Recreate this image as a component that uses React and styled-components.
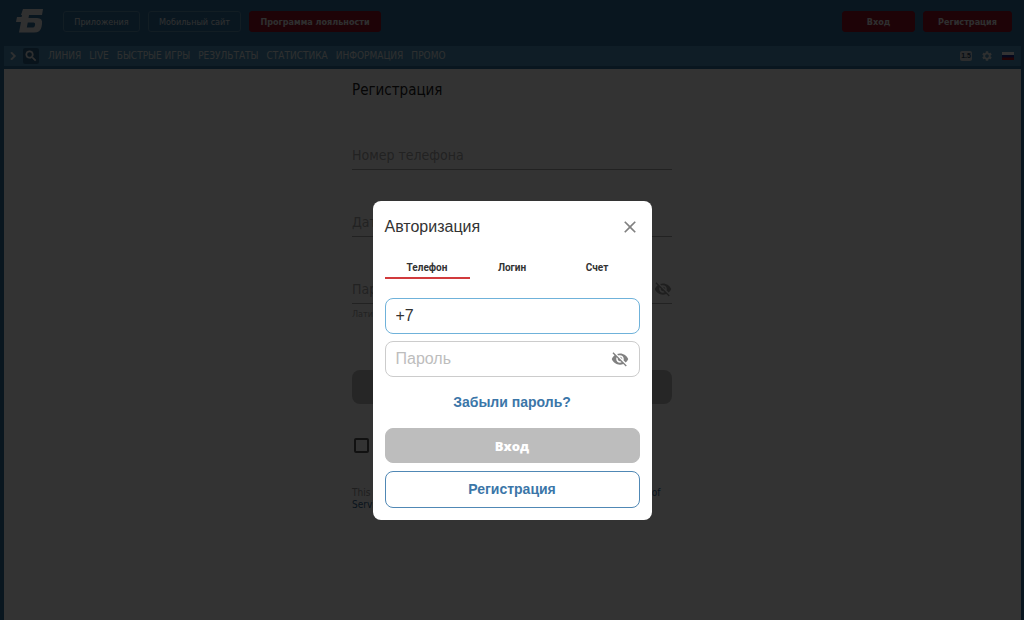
import React, { useState } from "react";
import styled, { createGlobalStyle } from "styled-components";
import { MdVisibilityOff, MdSettings, MdClose, MdSearch, MdChevronRight } from "react-icons/md";

const GlobalStyle = createGlobalStyle`
  * {
    box-sizing: border-box;
  }
  body {
    margin: 0;
    background: #2f6d9b;
    font-family: Tahoma, "DejaVu Sans Condensed", "Noto Sans", sans-serif;
  }
  button, input {
    font-family: inherit;
    margin: 0;
  }
`;

const Page = styled.div`
  min-height: 100vh;
  display: flex;
  flex-direction: column;
  background: #2f6d9b;
  padding: 0 3px 0 4px;
`;

const Header = styled.header`
  height: 46px;
  display: flex;
  align-items: center;
  gap: 8px;
  padding: 0 9px 3px 12px;
`;

const Logo = styled.svg`
  width: 28px;
  height: 26px;
  margin-right: 11px;
`;

const Spacer = styled.div`
  flex: 1;
`;

const HeaderButton = styled.button`
  height: 21px;
  padding: 0 10px;
  border-radius: 3px;
  border: 1px solid ${props => (props.$red ? "#960f23" : "#5a8fb0")};
  background: ${props => (props.$red ? "#960f23" : "transparent")};
  color: #e6eaec;
  font-size: 9px;
  line-height: 12px;
  font-weight: ${props => (props.$red ? "bold" : "normal")};
  min-width: ${props => props.$width || "0"};
  white-space: nowrap;
`;

const NavBar = styled.nav`
  height: 20px;
  display: flex;
  align-items: center;
  gap: 8px;
  padding: 0 7px 0 1px;
  background: #4a93bd;
  color: #e6eaec;
`;

const NavButton = styled.button`
  width: 16px;
  height: 16px;
  padding: 0;
  border: 0;
  border-radius: 2px;
  background: ${props => (props.$dark ? "#2c6289" : "transparent")};
  color: #f0f0f0;
  display: flex;
  align-items: center;
  justify-content: center;
  margin-left: ${props => (props.$dark ? "-6px" : "0")};
  font-size: ${props => (props.$dark ? "14px" : "16px")};

  path:last-child {
    stroke: currentColor;
    stroke-width: 1;
  }
`;

const NavLinks = styled.div`
  display: flex;
  gap: 8px;
  padding-left: 1px;
`;

const NavLink = styled.a`
  color: inherit;
  font-size: 10px;
  line-height: 14px;
  text-decoration: none;
  white-space: nowrap;
`;

const NavTools = styled.div`
  display: flex;
  align-items: center;
  gap: 9px;
`;

const OddsBadge = styled.button`
  width: 12px;
  height: 10px;
  padding: 0;
  border: 0;
  border-radius: 2px;
  background: #d5dce0;
  color: #1f4560;
  font-family: "Liberation Sans", Arial, sans-serif;
  font-size: 7px;
  font-weight: bold;
  line-height: 10px;
`;

const Flag = styled.svg`
  width: 12px;
  height: 8px;
`;

const Content = styled.main`
  flex: 1;
  margin-top: 3px;
  padding-right: 1px;
  background: #fff;
  display: flex;
  justify-content: center;
`;

const Form = styled.form`
  width: 320px;
  padding-top: 9px;
`;

const FormTitle = styled.h1`
  margin: 0 0 44px;
  font-size: 15px;
  line-height: 24px;
  font-weight: normal;
  color: #222;
`;

const Field = styled.div`
  display: flex;
  align-items: center;
  height: 24px;
  margin-bottom: 43px;
  padding-bottom: 6px;
  border-bottom: 1px solid #aaa;
  color: #999;
  font-size: 18px;
`;

const LineInput = styled.input`
  flex: 1;
  min-width: 0;
  padding: 0;
  border: 0;
  outline: none;
  background: transparent;
  font-size: 14px;
  line-height: 16px;

  &::placeholder {
    color: #aaa;
  }
`;

const Hint = styled.p`
  margin: -39px 0 50px;
  font-size: 9px;
  line-height: 12px;
  color: #aaa;
`;

const SubmitButton = styled.button`
  display: block;
  width: 100%;
  height: 34px;
  border: 0;
  border-radius: 8px;
  background: #bdbdbd;
  color: #fff;
  font-weight: bold;
`;

const Agreement = styled.label`
  display: flex;
  align-items: center;
  gap: 8px;
  margin: 34px 0;
  padding-left: 2px;
  height: 15px;
  font-size: 10px;
  color: #333;

  input {
    appearance: none;
    width: 15px;
    height: 15px;
    border: 2px solid #555;
    border-radius: 2px;
  }
`;

const Legal = styled.p`
  margin: 0;
  font-size: 10px;
  line-height: 12px;
  color: #999;

  a {
    color: #336791;
    text-decoration: none;
  }
`;

const Overlay = styled.div`
  position: fixed;
  inset: 0;
  display: flex;
  align-items: center;
  justify-content: center;
  padding-top: 101px;
  background: rgba(0, 0, 0, 0.8);
`;

const Modal = styled.div`
  width: 279px;
  padding: 12px;
  border-radius: 8px;
  background: #fff;
  font-family: "Liberation Sans", Arial, sans-serif;
`;

const ModalHead = styled.div`
  display: flex;
  align-items: center;
  justify-content: space-between;
  height: 28px;
  margin-bottom: 16px;
`;

const ModalTitle = styled.h2`
  margin: 0;
  font-size: 16px;
  font-weight: normal;
  color: #333;
`;

const IconButton = styled.button`
  display: flex;
  padding: 0;
  border: 0;
  background: transparent;
  color: ${props => props.$color || "#808080"};
  font-size: ${props => props.$size};
`;

const Tabs = styled.div`
  display: grid;
  grid-template-columns: repeat(3, 1fr);
  margin-bottom: 19px;
`;

const Tab = styled.button`
  height: 22px;
  padding: 0;
  border: 0;
  border-bottom: 2px solid ${props => (props.$active ? "#d13a3c" : "transparent")};
  background: transparent;
  color: #333;
  font-family: Roboto, sans-serif;
  font-size: 10px;
  font-weight: bold;
`;

const InputBox = styled.div`
  display: flex;
  align-items: center;
  height: 36px;
  margin-bottom: 7px;
  padding: 0 10px;
  border: 1px solid ${props => (props.$active ? "#6fb2da" : "#ccc")};
  border-radius: 8px;

  input {
    flex: 1;
    min-width: 0;
    padding: 0;
    border: 0;
    outline: none;
    background: transparent;
    color: #333;
    font-size: 16px;
  }
  input::placeholder {
    color: #bdbdbd;
  }
`;

const ForgotLink = styled.a`
  display: block;
  margin: 16px 0 17px;
  text-align: center;
  color: #3b76a8;
  font-size: 14px;
  line-height: 18px;
  font-weight: bold;
  text-decoration: none;
`;

const ModalButton = styled.button`
  display: block;
  width: 100%;
  height: ${props => (props.$disabled ? "35px" : "37px")};
  border-radius: 8px;
  font-weight: ${props => (props.$disabled ? "800" : "bold")};
  border: 1px solid ${props => (props.$disabled ? "#bdbdbd" : "#5088b5")};
  background: ${props => (props.$disabled ? "#bdbdbd" : "#fff")};
  color: ${props => (props.$disabled ? "#fff" : "#3b76a8")};
  font-family: ${props => (props.$disabled ? '"Open Sans", sans-serif' : "inherit")};
  font-size: ${props => (props.$disabled ? "13px" : "14px")};

  & + & {
    margin-top: 8px;
    padding-bottom: 3px;
  }
`;

const navItems = [
  "ЛИНИЯ",
  "LIVE",
  "БЫСТРЫЕ ИГРЫ",
  "РЕЗУЛЬТАТЫ",
  "СТАТИСТИКА",
  "ИНФОРМАЦИЯ",
  "ПРОМО"
];

const tabs = ["Телефон", "Логин", "Счет"];

const App = () => {
  const [activeTab, setActiveTab] = useState("Телефон");
  const [phone, setPhone] = useState("+7");

  return (
    <>
      <GlobalStyle />
      <Page>
        <Header>
          <Logo viewBox="0 0 28 26" fill="#f0f0f0">
            <path
              fillRule="evenodd"
              d="M7 0H27L26 6H13L12.500 9H21Q27 9 26 15L25.500 18Q24.500 23.500 18 23.500H3L5 13H0L1 8H5.600L6 6H5ZM11.800 13.500L10.800 18.500H16.500Q18.500 18.500 18.800 17L19.100 15.500Q19.400 13.500 17.500 13.500Z"
            />
          </Logo>
          <HeaderButton $width="77px">Приложения</HeaderButton>
          <HeaderButton $width="93px">Мобильный сайт</HeaderButton>
          <HeaderButton $red $width="132px">Программа лояльности</HeaderButton>
          <Spacer />
          <HeaderButton $red $width="73px">Вход</HeaderButton>
          <HeaderButton $red $width="89px">Регистрация</HeaderButton>
        </Header>
        <NavBar>
          <NavButton aria-label="Меню">
            <MdChevronRight />
          </NavButton>
          <NavButton $dark aria-label="Поиск">
            <MdSearch />
          </NavButton>
          <NavLinks>
            {navItems.map(item => (
              <NavLink key={item} href="#">
                {item}
              </NavLink>
            ))}
          </NavLinks>
          <Spacer />
          <NavTools>
            <OddsBadge>1.5</OddsBadge>
            <IconButton $size="12px" $color="#e6eaec" aria-label="Настройки">
              <MdSettings />
            </IconButton>
            <Flag viewBox="0 0 12 8">
              <rect width="12" height="3" fill="#fff" />
              <rect y="3" width="12" height="3" fill="#1a2c8c" />
              <rect y="5.500" width="12" height="2.500" fill="#b01820" />
            </Flag>
          </NavTools>
        </NavBar>
        <Content>
          <Form>
            <FormTitle>Регистрация</FormTitle>
            <Field>
              <LineInput placeholder="Номер телефона" aria-label="Номер телефона" />
            </Field>
            <Field>
              <LineInput placeholder="Дата рождения" aria-label="Дата рождения" />
            </Field>
            <Field>
              <LineInput type="password" placeholder="Пароль" aria-label="Пароль" />
              <MdVisibilityOff />
            </Field>
            <Hint>Латинские буквы</Hint>
            <SubmitButton type="button" aria-label="Регистрация" />
            <Agreement>
              <input type="checkbox" aria-label="Согласие" />
            </Agreement>
            <Legal>
              This site is protected by reCAPTCHA and follows the Google <a href="#">Terms of Service</a>
            </Legal>
          </Form>
        </Content>
      </Page>
      <Overlay>
        <Modal role="dialog" aria-label="Авторизация">
          <ModalHead>
            <ModalTitle>Авторизация</ModalTitle>
            <IconButton $size="20px" aria-label="Закрыть">
              <MdClose />
            </IconButton>
          </ModalHead>
          <Tabs>
            {tabs.map(tab => (
              <Tab key={tab} $active={tab === activeTab} onClick={() => setActiveTab(tab)}>
                {tab}
              </Tab>
            ))}
          </Tabs>
          <InputBox $active>
            <input
              type="tel"
              aria-label="Телефон"
              value={phone}
              onChange={e => setPhone(e.target.value)}
            />
          </InputBox>
          <InputBox>
            <input type="password" placeholder="Пароль" aria-label="Пароль" />
            <IconButton $size="18px" aria-label="Показать пароль">
              <MdVisibilityOff />
            </IconButton>
          </InputBox>
          <ForgotLink href="#">Забыли пароль?</ForgotLink>
          <ModalButton $disabled>Вход</ModalButton>
          <ModalButton>Регистрация</ModalButton>
        </Modal>
      </Overlay>
    </>
  );
};

export default App;
